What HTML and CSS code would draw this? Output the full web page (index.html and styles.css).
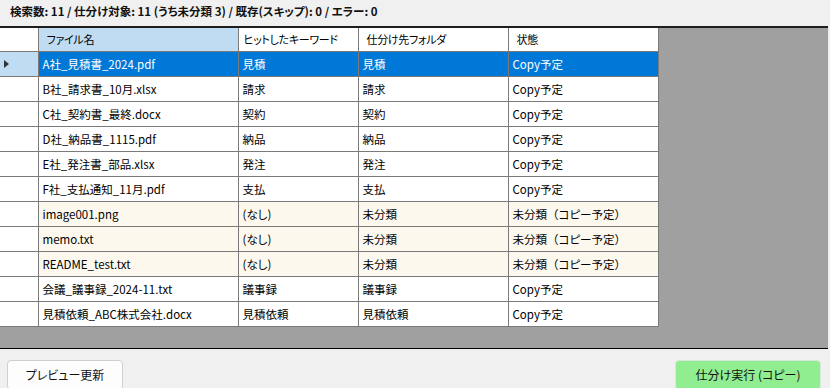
FILE: index.html
```html
<!DOCTYPE html>
<html lang="ja">
<head>
    <meta charset="UTF-8">
    <title>仕分けプレビュー</title>
    <link rel="stylesheet" href="styles.css">
</head>
<body>
    <!-- 集計 -->
    <div class="status-bar">検索数: 11 / 仕分け対象: 11 (うち未分類 3) / 既存(スキップ): 0 / エラー: 0</div>

    <!-- 一覧 -->
    <div class="grid-area">
        <table class="grid">
            <thead>
                <tr>
                    <th class="row-head"></th>
                    <th class="col-name active">ファイル名</th>
                    <th class="col-key tight">ヒットしたキーワード</th>
                    <th class="col-dest">仕分け先フォルダ</th>
                    <th class="col-state">状態</th>
                </tr>
            </thead>
            <tbody>
                <tr class="selected">
                    <td class="row-head"><span class="arrow"></span></td>
                    <td>A社_見積書_2024.pdf</td><td>見積</td><td>見積</td><td>Copy予定</td>
                </tr>
                <tr>
                    <td class="row-head"></td>
                    <td>B社_請求書_10月.xlsx</td><td>請求</td><td>請求</td><td>Copy予定</td>
                </tr>
                <tr>
                    <td class="row-head"></td>
                    <td>C社_契約書_最終.docx</td><td>契約</td><td>契約</td><td>Copy予定</td>
                </tr>
                <tr>
                    <td class="row-head"></td>
                    <td>D社_納品書_1115.pdf</td><td>納品</td><td>納品</td><td>Copy予定</td>
                </tr>
                <tr>
                    <td class="row-head"></td>
                    <td>E社_発注書_部品.xlsx</td><td>発注</td><td>発注</td><td>Copy予定</td>
                </tr>
                <tr>
                    <td class="row-head"></td>
                    <td>F社_支払通知_11月.pdf</td><td>支払</td><td>支払</td><td>Copy予定</td>
                </tr>
                <tr class="unsorted">
                    <td class="row-head"></td>
                    <td>image001.png</td><td>(なし)</td><td>未分類</td><td>未分類<span class="wide">（</span>コピー予定<span class="wide">）</span></td>
                </tr>
                <tr class="unsorted">
                    <td class="row-head"></td>
                    <td>memo.txt</td><td>(なし)</td><td>未分類</td><td>未分類<span class="wide">（</span>コピー予定<span class="wide">）</span></td>
                </tr>
                <tr class="unsorted">
                    <td class="row-head"></td>
                    <td>README_test.txt</td><td>(なし)</td><td>未分類</td><td>未分類<span class="wide">（</span>コピー予定<span class="wide">）</span></td>
                </tr>
                <tr>
                    <td class="row-head"></td>
                    <td>会議_議事録_2024-11.txt</td><td>議事録</td><td>議事録</td><td>Copy予定</td>
                </tr>
                <tr>
                    <td class="row-head"></td>
                    <td>見積依頼_ABC株式会社.docx</td><td>見積依頼</td><td>見積依頼</td><td>Copy予定</td>
                </tr>
            </tbody>
        </table>
    </div>

    <!-- 操作ボタン -->
    <div class="action-bar">
        <button class="btn">プレビュー更新</button>
        <button class="btn btn-run">仕分け実行 (コピー)</button>
    </div>
</body>
</html>
```

FILE: styles.css
```css
/* ========== 基本 ========== */
:root {
    --panel: #f0f0f0;
    --workspace: #a0a0a0;
    --grid-line: #7a7a7a;
    --select: #0078d7;
    --head-active: #bfdcf3;
    --unsorted: #fdf8ee;
    --run: #90ee90;
}

* {
    margin: 0;
    padding: 0;
    box-sizing: border-box;
}

html, body {
    width: 830px;
    height: 388px;
    overflow: hidden;
}

body {
    background: var(--panel);
    font-family: "Noto Sans CJK JP", "Noto Sans", sans-serif;
    font-size: 12px;
    font-feature-settings: "palt";
    color: #000;
    display: flex;
    flex-direction: column;
}

/* ========== 集計 ========== */
.status-bar {
    height: 26px;
    padding: 3px 0 0 10px;
    font-size: 11.5px;
    font-weight: bold;
    line-height: 16px;
    color: #111;
    flex-shrink: 0;
}

/* ========== 一覧 ========== */
.grid-area {
    height: 323px;
    margin-right: 2px;
    background: var(--workspace);
    border-top: 2px solid #1e1e1e;
    border-bottom: 1px solid #000;
    flex-shrink: 0;
}

.grid {
    border-collapse: collapse;
    table-layout: fixed;
    width: 658px;
    background: #fff;
}

.grid th,
.grid td {
    border-right: 1px solid var(--grid-line);
    border-bottom: 1px solid var(--grid-line);
    text-align: left;
    font-weight: normal;
    white-space: nowrap;
    overflow: hidden;
    padding: 0 0 0 4px;
}

.grid th {
    height: 23px;
    font-size: 11px;
    letter-spacing: -0.3px;
    padding-left: 8px;
    border-top: none;
}

.grid th.tight { padding-left: 5px; }
.grid th.active { background: var(--head-active); }

.grid td {
    height: 25px;
    font-size: 11.5px;
    line-height: 16px;
}

.grid .wide { font-feature-settings: normal; }

.grid .row-head { width: 38px; }
.grid .col-name { width: 200px; }
.grid .col-key { width: 120px; }
.grid .col-dest { width: 150px; }
.grid .col-state { width: 150px; }

.grid tr.unsorted td { background: var(--unsorted); }

.grid tr.selected td {
    background: var(--select);
    color: #fff;
}

.grid tr td.row-head {
    background: #fff;
}

.grid tr.selected td.row-head {
    background: var(--head-active);
}

.arrow {
    display: block;
    width: 0;
    height: 0;
    border-top: 4px solid transparent;
    border-bottom: 4px solid transparent;
    border-left: 5px solid #333;
}

/* ========== 操作ボタン ========== */
.action-bar {
    flex: 1;
    display: flex;
    justify-content: space-between;
    padding: 11px 9px 0 7px;
}

.btn {
    width: 116px;
    height: 30px;
    border: 1px solid #cfcfcf;
    border-radius: 4px;
    background: #fdfdfd;
    font: 12px "Noto Sans CJK JP", "Noto Sans", sans-serif;
    font-feature-settings: "palt";
    color: #111;
    padding-bottom: 2px;
}

.btn-run {
    width: 146px;
    background: var(--run);
    border-color: #d8e8d8;
}
```
